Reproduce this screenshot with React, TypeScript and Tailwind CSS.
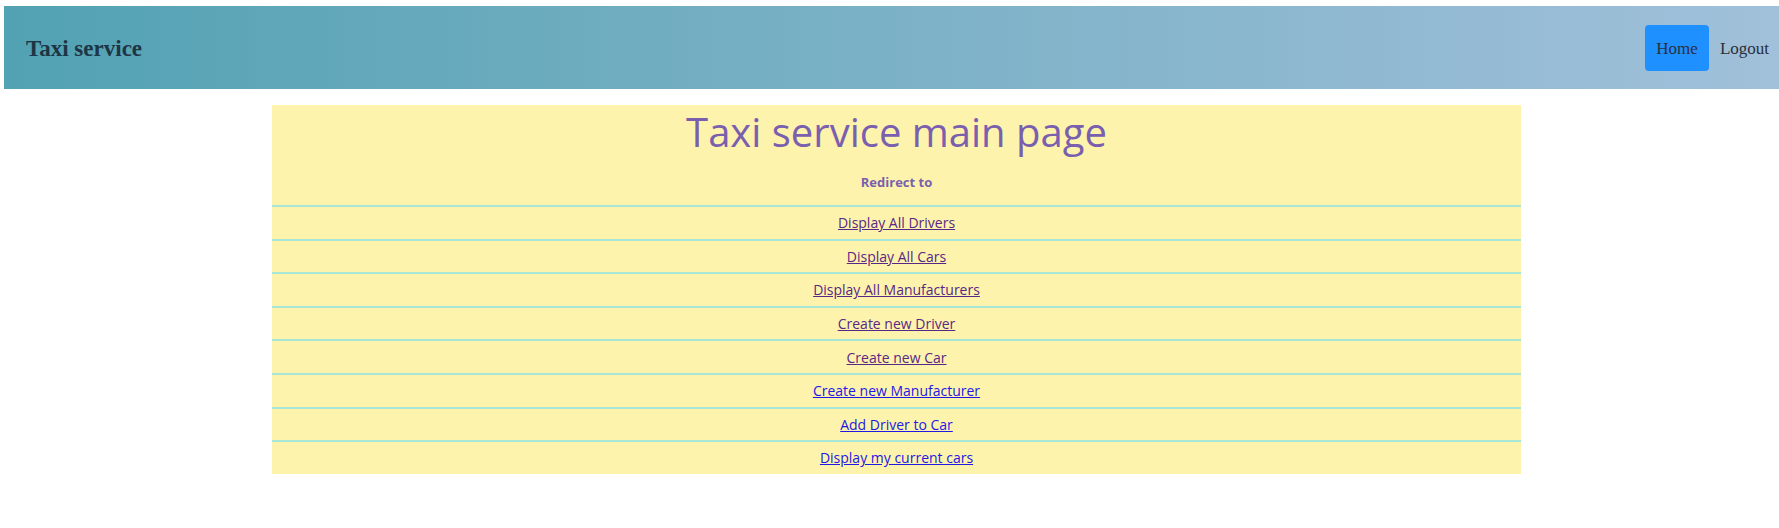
const links = [
  { label: "Display All Drivers", visited: true },
  { label: "Display All Cars", visited: true },
  { label: "Display All Manufacturers", visited: true },
  { label: "Create new Driver", visited: true },
  { label: "Create new Car", visited: true },
  { label: "Create new Manufacturer", visited: false },
  { label: "Add Driver to Car", visited: false },
  { label: "Display my current cars", visited: false },
];

function Header() {
  return (
    <nav className="ml-[4px] mt-[6px] flex h-[83px] items-center justify-between bg-gradient-to-r from-[#51a2b3] to-[#a1c0da] pl-[22px] pr-[10px] font-['Liberation_Serif',serif]">
      <a href="#" className="pt-[3px] text-[23px] font-bold text-[#1d3545]">
        Taxi service
      </a>
      <div className="flex items-center gap-[11px] text-[17px] text-[#2a2f3a]">
        <a href="#" className="flex h-[46px] items-center rounded-[4px] bg-[#1e90ff] px-[11px] pt-[2px]">
          Home
        </a>
        <a href="#" className="pt-[2px]">Logout</a>
      </div>
    </nav>
  );
}

export default function App() {
  return (
    <div className="min-h-screen bg-white">
      <Header />
      <div className="ml-[272px] mt-[16px] w-[1249px] bg-[#fef3ac] text-center font-['Open_Sans','Noto_Sans',sans-serif] text-[#7a5fae]">
        <h1 className="flex h-[53px] items-center justify-center text-[40px] font-medium leading-none">
          Taxi service main page
        </h1>
        <div className="flex h-[47px] items-center justify-center pt-[2px] text-[13px] font-bold">
          Redirect to
        </div>
        {links.map((link) => (
          <div
            key={link.label}
            className="flex h-[33.6px] items-center justify-center border-t-2 border-[#a9e6d6] text-[14px]"
          >
            <a
              href="#"
              className={
                link.visited
                  ? "text-[#582886] underline"
                  : "text-[#2218e6] underline"
              }
            >
              {link.label}
            </a>
          </div>
        ))}
      </div>
    </div>
  );
}
